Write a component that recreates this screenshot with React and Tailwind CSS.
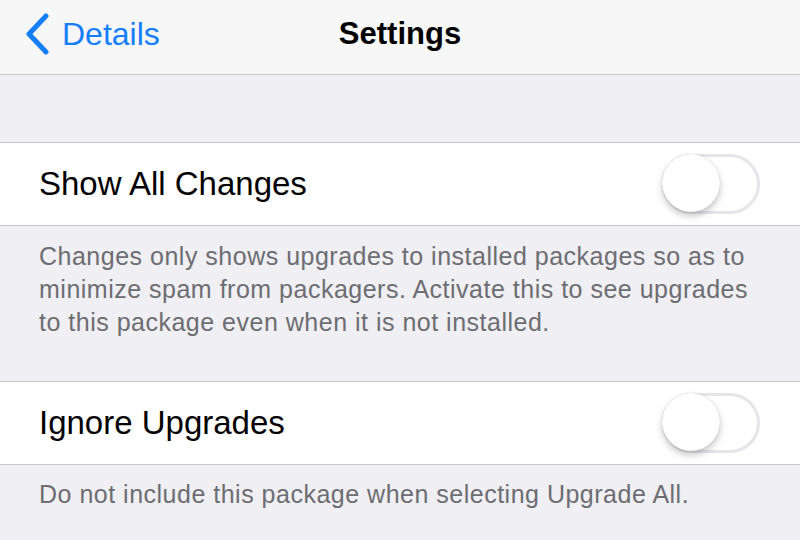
function Toggle() {
    return (
        <div className="relative w-[98px] h-[60px] rounded-full border-[3px] border-[#e5e5ea] bg-white">
            <div className="absolute left-[-3px] top-[-3px] w-[58px] h-[58px] rounded-full bg-white shadow-[0_4px_7px_rgba(0,0,0,0.22),0_0_1px_rgba(0,0,0,0.25)]" />
        </div>
    )
}

function Row({ label }) {
    return (
        <div className="flex items-center justify-between h-[84px] bg-white border-y border-[#c8c7cc] pl-[39px] pr-[40px]">
            <span className="text-[33px] text-black">{label}</span>
            <Toggle />
        </div>
    )
}

export default function App() {
    return (
        <div className="w-[800px] h-[540px] overflow-hidden bg-[#efeff4] font-['Liberation_Sans',sans-serif]">

            <div className="relative flex items-center h-[75px] pb-[7px] bg-[#f7f7f8] border-b border-[#c8c7cc]">
                <div className="flex items-center gap-[12px] pl-[24px] text-[#147efb]">
                    <svg width="26" height="42" viewBox="0 0 26 42">
                        <path d="M22 3 L5 21 L22 39" fill="none" stroke="#147efb" strokeWidth="5" strokeLinecap="round" strokeLinejoin="round" />
                    </svg>
                    <span className="text-[32px]">Details</span>
                </div>
                <span className="absolute left-1/2 top-[14px] -translate-x-1/2 text-[31px] leading-[40px] font-bold text-black">
                    Settings
                </span>
            </div>

            <div className="h-[67px]" />

            <Row label="Show All Changes" />

            <p className="pl-[39px] pr-[40px] pt-[14px] pb-[42px] text-[25px] tracking-[0.5px] leading-[33px] text-[#6d6d72]">
                Changes only shows upgrades to installed packages so as to minimize spam from packagers. Activate this to see upgrades to this package even when it is not installed.
            </p>

            <Row label="Ignore Upgrades" />

            <p className="pl-[39px] pr-[40px] pt-[13px] text-[25px] tracking-[0.5px] leading-[33px] text-[#6d6d72]">
                Do not include this package when selecting Upgrade All.
            </p>

        </div>
    )
}
